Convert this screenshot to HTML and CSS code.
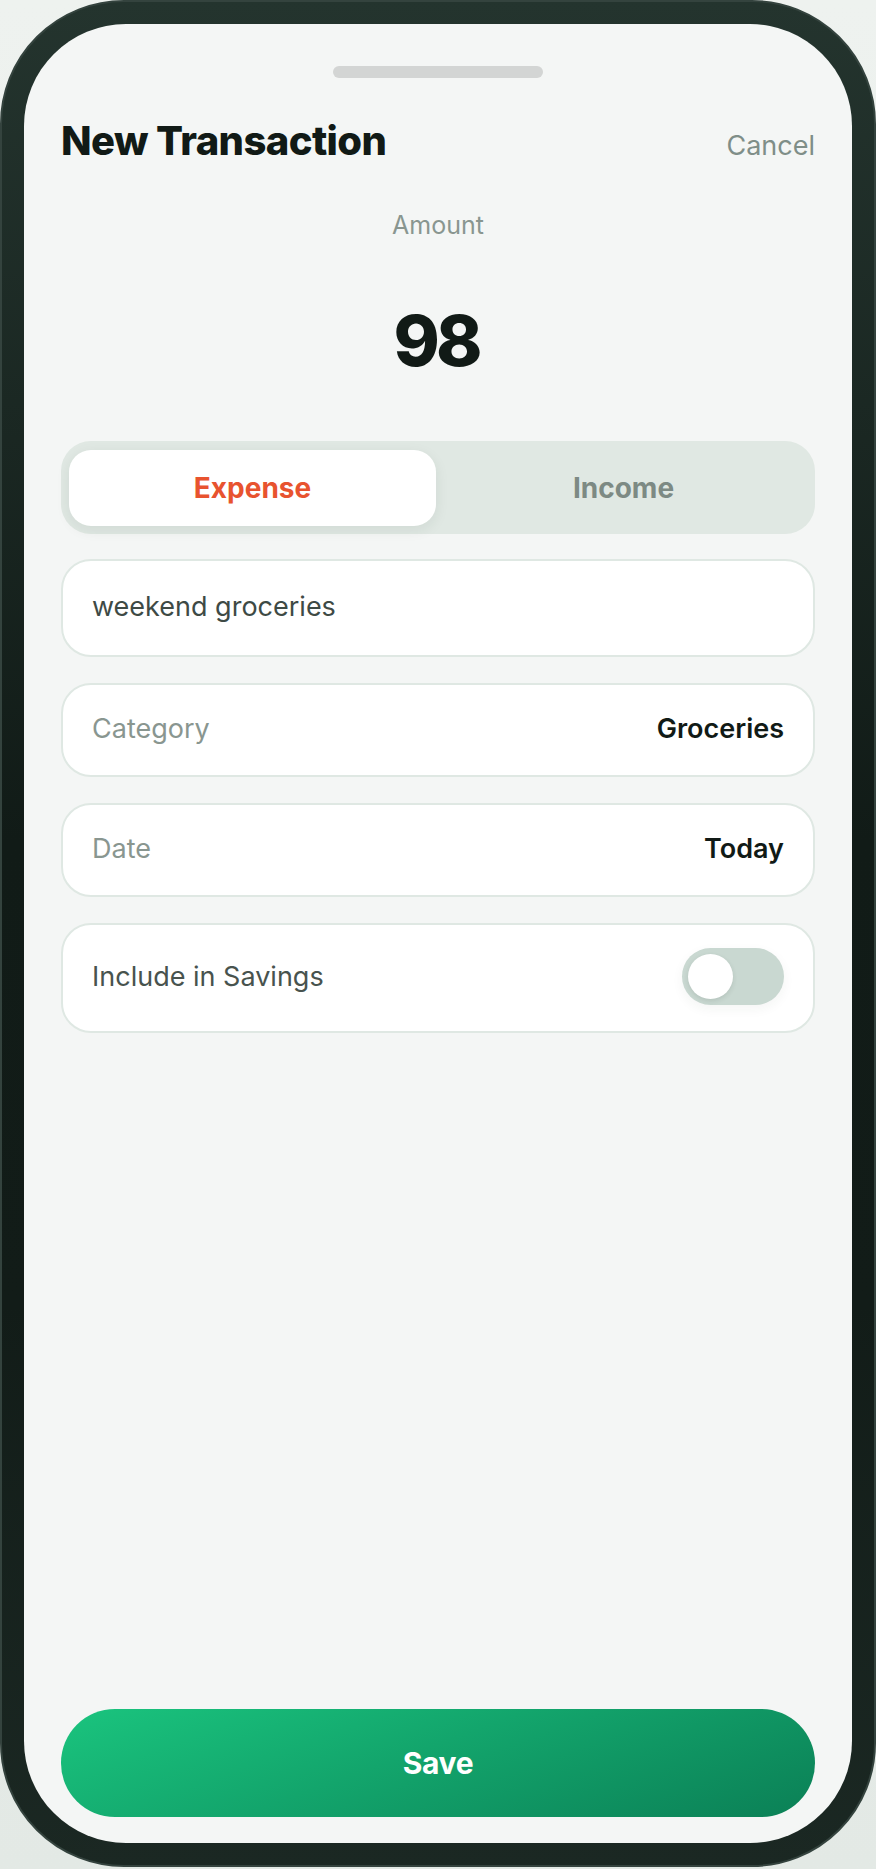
FILE: index.html
```html
<!DOCTYPE html>
<html lang="en">
<head>
<meta charset="utf-8">
<title>New Transaction</title>
<link rel="stylesheet" href="styles.css">
</head>
<body>
<div class="phone">
  <div class="screen">
    <div class="handle"></div>
    <header class="header">
      <h1 class="title">New Transaction</h1>
      <span class="cancel">Cancel</span>
    </header>
    <div class="amount-label">Amount</div>
    <div class="amount">98</div>
    <div class="segment">
      <div class="seg-item seg-active">Expense</div>
      <div class="seg-item">Income</div>
    </div>
    <div class="field field-input">
      <span class="input-text">weekend groceries</span>
    </div>
    <div class="field field-row">
      <span class="field-label">Category</span>
      <span class="field-value">Groceries</span>
    </div>
    <div class="field field-row">
      <span class="field-label">Date</span>
      <span class="field-value">Today</span>
    </div>
    <div class="field field-toggle">
      <span class="toggle-label">Include in Savings</span>
      <span class="toggle"><span class="knob"></span></span>
    </div>
    <button class="save">Save</button>
  </div>
</div>
</body>
</html>
```

FILE: styles.css
```css
* { box-sizing: border-box; }
html, body { margin: 0; padding: 0; }
body {
  width: 876px;
  height: 1869px;
  background: linear-gradient(180deg, #eef2ef 0%, #e3e9e5 100%);
  font-family: "Inter", "Liberation Sans", sans-serif;
  overflow: hidden;
}
.phone {
  width: 876px;
  height: 1867px;
  border-radius: 124px;
  border: 2px solid #34433e;
  background: linear-gradient(180deg, #24342e 0%, #111b17 45%, #121c18 70%, #1b2823 100%);
  padding: 22px;
}
.screen {
  height: 100%;
  border-radius: 102px;
  background: #f4f6f5;
  display: flex;
  flex-direction: column;
  padding: 0 37px 26px;
}
.handle {
  align-self: center;
  width: 210px;
  height: 12px;
  border-radius: 6px;
  background: #d3d5d4;
  margin-top: 42px;
}
.header {
  display: flex;
  justify-content: space-between;
  align-items: baseline;
  margin-top: 43px;
}
.title {
  margin: 0;
  font-size: 40px;
  line-height: 1;
  font-weight: 800;
  letter-spacing: -0.6px;
  color: #111a16;
}
.cancel {
  font-size: 27px;
  line-height: 1;
  color: #7f8e88;
}
.amount-label {
  margin-top: 52px;
  text-align: center;
  font-size: 25px;
  line-height: 1;
  color: #899690;
}
.amount {
  margin-top: 68px;
  text-align: center;
  font-size: 70px;
  line-height: 1;
  font-weight: 800;
  letter-spacing: -4px;
  text-indent: -4px;
  color: #111a16;
}
.segment {
  margin-top: 65px;
  height: 93px;
  border-radius: 30px;
  background: #e0e8e3;
  padding: 9px 8px 8px;
  display: grid;
  grid-template-columns: 1fr 1fr;
  gap: 4px;
}
.seg-item {
  display: flex;
  align-items: center;
  justify-content: center;
  border-radius: 22px;
  font-size: 28px;
  font-weight: 700;
  color: #7d8a84;
}
.seg-active {
  background: #ffffff;
  color: #e8532f;
  box-shadow: 0 4px 14px rgba(30, 50, 40, 0.08);
}
.field {
  margin-top: 25px;
  background: #ffffff;
  border: 2.5px solid #dfe8e3;
  border-radius: 30px;
  display: flex;
  align-items: center;
  padding: 0 29px 3px;
  font-size: 27px;
}
.field-input { height: 98px; }
.input-text { color: #3e4a45; }
.field-row {
  height: 94px;
  justify-content: space-between;
  margin-top: 26px;
}
.field-label { color: #899690; }
.field-value { color: #111a16; font-weight: 600; }
.field-toggle {
  height: 110px;
  justify-content: space-between;
  margin-top: 26px;
}
.toggle-label { color: #48534e; }
.toggle {
  width: 102px;
  height: 57px;
  border-radius: 29px;
  background: #c9d8d1;
  padding: 6px;
  display: flex;
  align-items: center;
  box-shadow: 0 4px 12px rgba(30, 50, 40, 0.05);
}
.knob {
  width: 45px;
  height: 45px;
  border-radius: 50%;
  background: #ffffff;
  box-shadow: 0 2px 5px rgba(30, 50, 40, 0.12);
}
.save {
  margin-top: auto;
  height: 108px;
  width: 100%;
  border: none;
  border-radius: 54px;
  background: linear-gradient(160deg, #1ac47e 0%, #13a56c 45%, #0b8056 100%);
  color: #ffffff;
  font-family: "Inter", "Liberation Sans", sans-serif;
  font-size: 30px;
  font-weight: 700;
  letter-spacing: -0.3px;
}
```
